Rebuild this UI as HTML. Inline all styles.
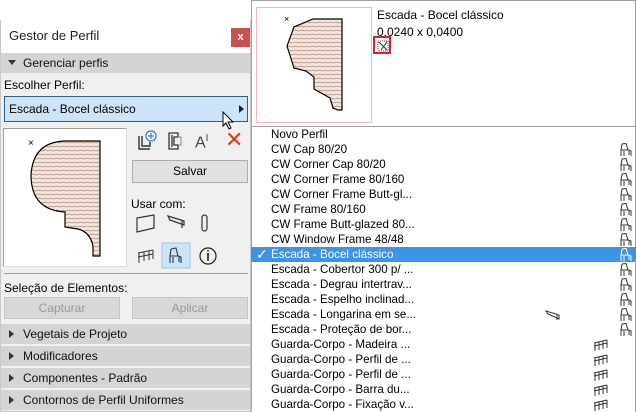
<!DOCTYPE html>
<html><head><meta charset="utf-8"><style>
*{margin:0;padding:0;box-sizing:border-box}
body{width:636px;height:412px;overflow:hidden;background:#fff;font-family:"Liberation Sans",sans-serif;font-size:12px;color:#000;position:relative}
.a{position:absolute}
.sec{position:absolute;left:1px;width:249px;height:20px;background:#d4d4d4;padding-left:22px;line-height:20px;font-size:12px;color:#111}
.sec:before{content:"";position:absolute;left:8px;top:6px;border-left:5px solid #333;border-top:4px solid transparent;border-bottom:4px solid transparent}
.btn{position:absolute;background:#e1e1e1;border:1px solid #adadad;text-align:center;line-height:21px}
.row{position:absolute;left:251px;width:385px;height:15px;line-height:15px;padding-left:20px;white-space:nowrap;font-size:11.6px}
.ic{position:absolute;right:4px;top:1px}
.rl{position:absolute;left:342px;top:1px}
</style></head><body>
<svg width="0" height="0" style="position:absolute"><defs>
<pattern id="h" width="6" height="4" patternUnits="userSpaceOnUse"><rect width="6" height="4" fill="#f2e6e0"/><path d="M0 3 L3 2 L6 3" stroke="#b08878" stroke-width="0.7" fill="none"/></pattern>
</defs></svg>

<div class="a" style="left:0;top:20px;width:251px;height:392px;background:#f0f0f0;border:1px solid #c8c8c8;border-top:none"></div>
<div class="a" style="left:1px;top:20px;width:249px;height:33px;background:#fff"></div>
<div class="a" style="left:9px;top:28px;font-size:13px;color:#222">Gestor de Perfil</div>
<div class="a" style="left:231px;top:28px;width:19px;height:19px;background:#c75050;color:#fff;font-size:11px;font-weight:bold;text-align:center;line-height:18px">x</div>
<div class="sec" style="top:53px">Gerenciar perfis</div>
<div class="a" style="left:4px;top:56px;width:14px;height:14px;background:#d4d4d4;z-index:2"></div>
<div class="a" style="left:8px;top:60px;border-top:5px solid #333;border-left:4px solid transparent;border-right:4px solid transparent;width:0;z-index:3"></div>
<div class="a" style="left:4px;top:78px">Escolher Perfil:</div>
<div class="a" style="left:4px;top:96px;width:244px;height:26px;background:#cce4f7;border:1px solid #2b5f8f;padding-left:4px;line-height:24px">Escada - Bocel clássico</div>
<div class="a" style="left:239px;top:105px;border-left:5px solid #222;border-top:4px solid transparent;border-bottom:4px solid transparent"></div>
<svg class="a" style="left:222px;top:111px" width="14" height="20"><path d="M1 1 L1 15 L4 12 L7 18 L9 17 L6 11 L11 11 Z" fill="#fff" stroke="#000"/></svg>
<div class="a" style="left:3px;top:128px;width:124px;height:139px;background:#fff;border:1px solid #a0a0a0;border-right-color:#ddd;border-bottom-color:#ddd"></div>
<svg class="a" style="left:0;top:120px" width="130" height="150">
<text x="28" y="26" font-size="10" font-family="Liberation Sans">×</text>
<path d="M65 21 L100 21 L100 136 L93 136 L93 126 Q90 112 78 109 L65 107 L65 92 Q31 90 31 55 Q33 22 65 21 Z" fill="url(#h)" stroke="#000" stroke-width="1.2"/>
</svg>
<svg class="a" style="left:136px;top:130px" width="22" height="22"><path d="M3 6 L3 19 L14 19 M6 6 L6 16 L14 16 L14 12" stroke="#333" fill="none" stroke-width="1.4"/><circle cx="15" cy="6" r="5" fill="#fff" stroke="#2b7bd6" stroke-width="1.2"/><path d="M15 3 V9 M12 6 H18" stroke="#2b7bd6" stroke-width="1.2"/></svg>
<svg class="a" style="left:166px;top:131px" width="20" height="22"><path d="M3 2 H12 V6 H8 V14 H12 V18 H3 Z M6 4 V16" stroke="#333" fill="none" stroke-width="1.3"/><path d="M12 6 H15 V14 H12" stroke="#888" fill="none"/></svg>
<div class="a" style="left:195px;top:133px;font-size:16px;color:#444">A<sup style="font-size:10px">I</sup></div>
<div class="a" style="left:225px;top:128px;font-size:22px;color:#e8341c;line-height:24px">✕</div>
<div class="btn" style="left:132px;top:160px;width:116px;height:23px">Salvar</div>
<div class="a" style="left:131px;top:197px">Usar com:</div>
<svg class="a" style="left:132px;top:213px" width="120" height="58">
<path d="M5 5 L22 2 L22 15 L5 19 Z" stroke="#333" fill="none" stroke-width="1.2"/>
<path d="M36 3 L52 8 L52 12 L38 7 Z M50 8 L50 15" stroke="#333" fill="none" stroke-width="1.2"/>
<rect x="70" y="2" width="5" height="16" rx="2.5" stroke="#333" fill="none" stroke-width="1.2"/>
<rect x="30" y="30" width="28" height="25" fill="#cce4f7" stroke="#99c9ef"/>
<path d="M6 40 L21 37 M6 44 L21 41 M7 40 V50 M12 39 V48 M17 38 V47 M21 37 V46" stroke="#333" fill="none"/>
<path d="M39 36 L44 35 L46 43 L49 44 L49 50 M39 36 L38 43 L47 43 M38 43 L38 50 M41 44 L41 50 M47 44 L47 49" stroke="#333" fill="none" stroke-width="1.1"/>
<circle cx="76" cy="43" r="8" stroke="#222" fill="none" stroke-width="1.2"/><path d="M76 40 V48 M76 37 V38.5" stroke="#222" stroke-width="1.6"/>
</svg>
<div class="a" style="left:4px;top:273px;width:244px;border-top:1px solid #a0a0a0"></div>
<div class="a" style="left:4px;top:281px">Seleção de Elementos:</div>
<div class="btn" style="left:4px;top:297px;width:116px;height:22px;color:#999;background:#d8d8d8;border-color:#c6c6c6">Capturar</div>
<div class="btn" style="left:132px;top:297px;width:116px;height:22px;color:#999;background:#d8d8d8;border-color:#c6c6c6">Aplicar</div>
<div class="sec" style="top:324px">Vegetais de Projeto</div>
<div class="sec" style="top:346px">Modificadores</div>
<div class="sec" style="top:368px">Componentes - Padrão</div>
<div class="sec" style="top:390px">Contornos de Perfil Uniformes</div>

<div class="a" style="left:251px;top:0;width:385px;height:412px;background:#fff;border:1px solid #a0a0a0;border-bottom:none"></div>
<div class="a" style="left:252px;top:126px;width:383px;border-top:1px solid #a0a0a0"></div>
<div class="a" style="left:256px;top:7px;width:116px;height:116px;border:1px solid #f4b8b8"></div>
<svg class="a" style="left:250px;top:0" width="125" height="125">
<text x="34" y="22" font-size="9" font-family="Liberation Sans">×</text>
<path d="M63 19 L92 19 L92 110 L88 110 L83 108 L80 98 L64 89 L64 77 L56 71 L44 68 L37 46 L44 27 Z" fill="url(#h)" stroke="#000" stroke-width="1.2"/>
</svg>
<div class="a" style="left:377px;top:8px">Escada - Bocel clássico</div>
<div class="a" style="left:377px;top:25px">0,0240 x 0,0400</div>
<div class="a" style="left:373px;top:36px;width:18px;height:18px;border:2px solid #e02020"></div>
<svg class="a" style="left:377px;top:40px" width="12" height="12"><rect x="1" y="1" width="10" height="10" fill="none" stroke="#555" stroke-dasharray="1 1"/><path d="M2 2 L10 10 M10 2 L4 10" stroke="#333"/></svg>

<div class="row" style="top:127px">Novo Perfil</div>
<div class="row" style="top:142px">CW Cap 80/20<svg class="ic" width="12" height="14"><path d="M2 1 L6 0.5 L8 7 L11 8 L11 13 M2 1 L1 7 L9 7 M1 7 V13 M4 8 V13 M9 8 V12" stroke="#333" fill="none"/></svg></div>
<div class="row" style="top:157px">CW Corner Cap 80/20<svg class="ic" width="12" height="14"><path d="M2 1 L6 0.5 L8 7 L11 8 L11 13 M2 1 L1 7 L9 7 M1 7 V13 M4 8 V13 M9 8 V12" stroke="#333" fill="none"/></svg></div>
<div class="row" style="top:172px">CW Corner Frame 80/160<svg class="ic" width="12" height="14"><path d="M2 1 L6 0.5 L8 7 L11 8 L11 13 M2 1 L1 7 L9 7 M1 7 V13 M4 8 V13 M9 8 V12" stroke="#333" fill="none"/></svg></div>
<div class="row" style="top:187px">CW Corner Frame Butt-gl...<svg class="ic" width="12" height="14"><path d="M2 1 L6 0.5 L8 7 L11 8 L11 13 M2 1 L1 7 L9 7 M1 7 V13 M4 8 V13 M9 8 V12" stroke="#333" fill="none"/></svg></div>
<div class="row" style="top:202px">CW Frame 80/160<svg class="ic" width="12" height="14"><path d="M2 1 L6 0.5 L8 7 L11 8 L11 13 M2 1 L1 7 L9 7 M1 7 V13 M4 8 V13 M9 8 V12" stroke="#333" fill="none"/></svg></div>
<div class="row" style="top:217px">CW Frame Butt-glazed 80...<svg class="ic" width="12" height="14"><path d="M2 1 L6 0.5 L8 7 L11 8 L11 13 M2 1 L1 7 L9 7 M1 7 V13 M4 8 V13 M9 8 V12" stroke="#333" fill="none"/></svg></div>
<div class="row" style="top:232px">CW Window Frame 48/48<svg class="ic" width="12" height="14"><path d="M2 1 L6 0.5 L8 7 L11 8 L11 13 M2 1 L1 7 L9 7 M1 7 V13 M4 8 V13 M9 8 V12" stroke="#333" fill="none"/></svg></div>
<div class="row" style="top:247px;background:#3d93e8;color:#fff"><span style="position:absolute;left:5px;font-size:14px">✓</span>Escada - Bocel clássico<svg class="ic" width="12" height="14"><path d="M2 1 L6 0.5 L8 7 L11 8 L11 13 M2 1 L1 7 L9 7 M1 7 V13 M4 8 V13 M9 8 V12" stroke="#fff" fill="none"/></svg></div>
<div class="row" style="top:262px">Escada - Cobertor 300 p/ ...<svg class="ic" width="12" height="14"><path d="M2 1 L6 0.5 L8 7 L11 8 L11 13 M2 1 L1 7 L9 7 M1 7 V13 M4 8 V13 M9 8 V12" stroke="#333" fill="none"/></svg></div>
<div class="row" style="top:277px">Escada - Degrau intertrav...<svg class="ic" width="12" height="14"><path d="M2 1 L6 0.5 L8 7 L11 8 L11 13 M2 1 L1 7 L9 7 M1 7 V13 M4 8 V13 M9 8 V12" stroke="#333" fill="none"/></svg></div>
<div class="row" style="top:292px">Escada - Espelho inclinad...<svg class="ic" width="12" height="14"><path d="M2 1 L6 0.5 L8 7 L11 8 L11 13 M2 1 L1 7 L9 7 M1 7 V13 M4 8 V13 M9 8 V12" stroke="#333" fill="none"/></svg></div>
<div class="row" style="top:307px">Escada - Longarina em se...<svg class="a" style="left:294px;top:2px" width="18" height="12"><path d="M1 2 L14 6 L14 10 L3 5 Z M12 6 L12 11" stroke="#333" fill="none"/></svg><svg class="ic" width="12" height="14"><path d="M2 1 L6 0.5 L8 7 L11 8 L11 13 M2 1 L1 7 L9 7 M1 7 V13 M4 8 V13 M9 8 V12" stroke="#333" fill="none"/></svg></div>
<div class="row" style="top:322px">Escada - Proteção de bor...<svg class="ic" width="12" height="14"><path d="M2 1 L6 0.5 L8 7 L11 8 L11 13 M2 1 L1 7 L9 7 M1 7 V13 M4 8 V13 M9 8 V12" stroke="#333" fill="none"/></svg></div>
<div class="row" style="top:337px">Guarda-Corpo -  Madeira ...<svg class="rl" width="16" height="14"><path d="M1 5 L14 2 M1 8 L14 5 M2 5 V13 M6 4 V12 M10 3 V11 M14 2 V10" stroke="#333" fill="none"/></svg></div>
<div class="row" style="top:352px">Guarda-Corpo -  Perfil de ...<svg class="rl" width="16" height="14"><path d="M1 5 L14 2 M1 8 L14 5 M2 5 V13 M6 4 V12 M10 3 V11 M14 2 V10" stroke="#333" fill="none"/></svg></div>
<div class="row" style="top:367px">Guarda-Corpo -  Perfil de ...<svg class="rl" width="16" height="14"><path d="M1 5 L14 2 M1 8 L14 5 M2 5 V13 M6 4 V12 M10 3 V11 M14 2 V10" stroke="#333" fill="none"/></svg></div>
<div class="row" style="top:382px">Guarda-Corpo - Barra du...<svg class="rl" width="16" height="14"><path d="M1 5 L14 2 M1 8 L14 5 M2 5 V13 M6 4 V12 M10 3 V11 M14 2 V10" stroke="#333" fill="none"/></svg></div>
<div class="row" style="top:397px">Guarda-Corpo - Fixação v...<svg class="rl" width="16" height="14"><path d="M1 5 L14 2 M1 8 L14 5 M2 5 V13 M6 4 V12 M10 3 V11 M14 2 V10" stroke="#333" fill="none"/></svg></div>
</body></html>
